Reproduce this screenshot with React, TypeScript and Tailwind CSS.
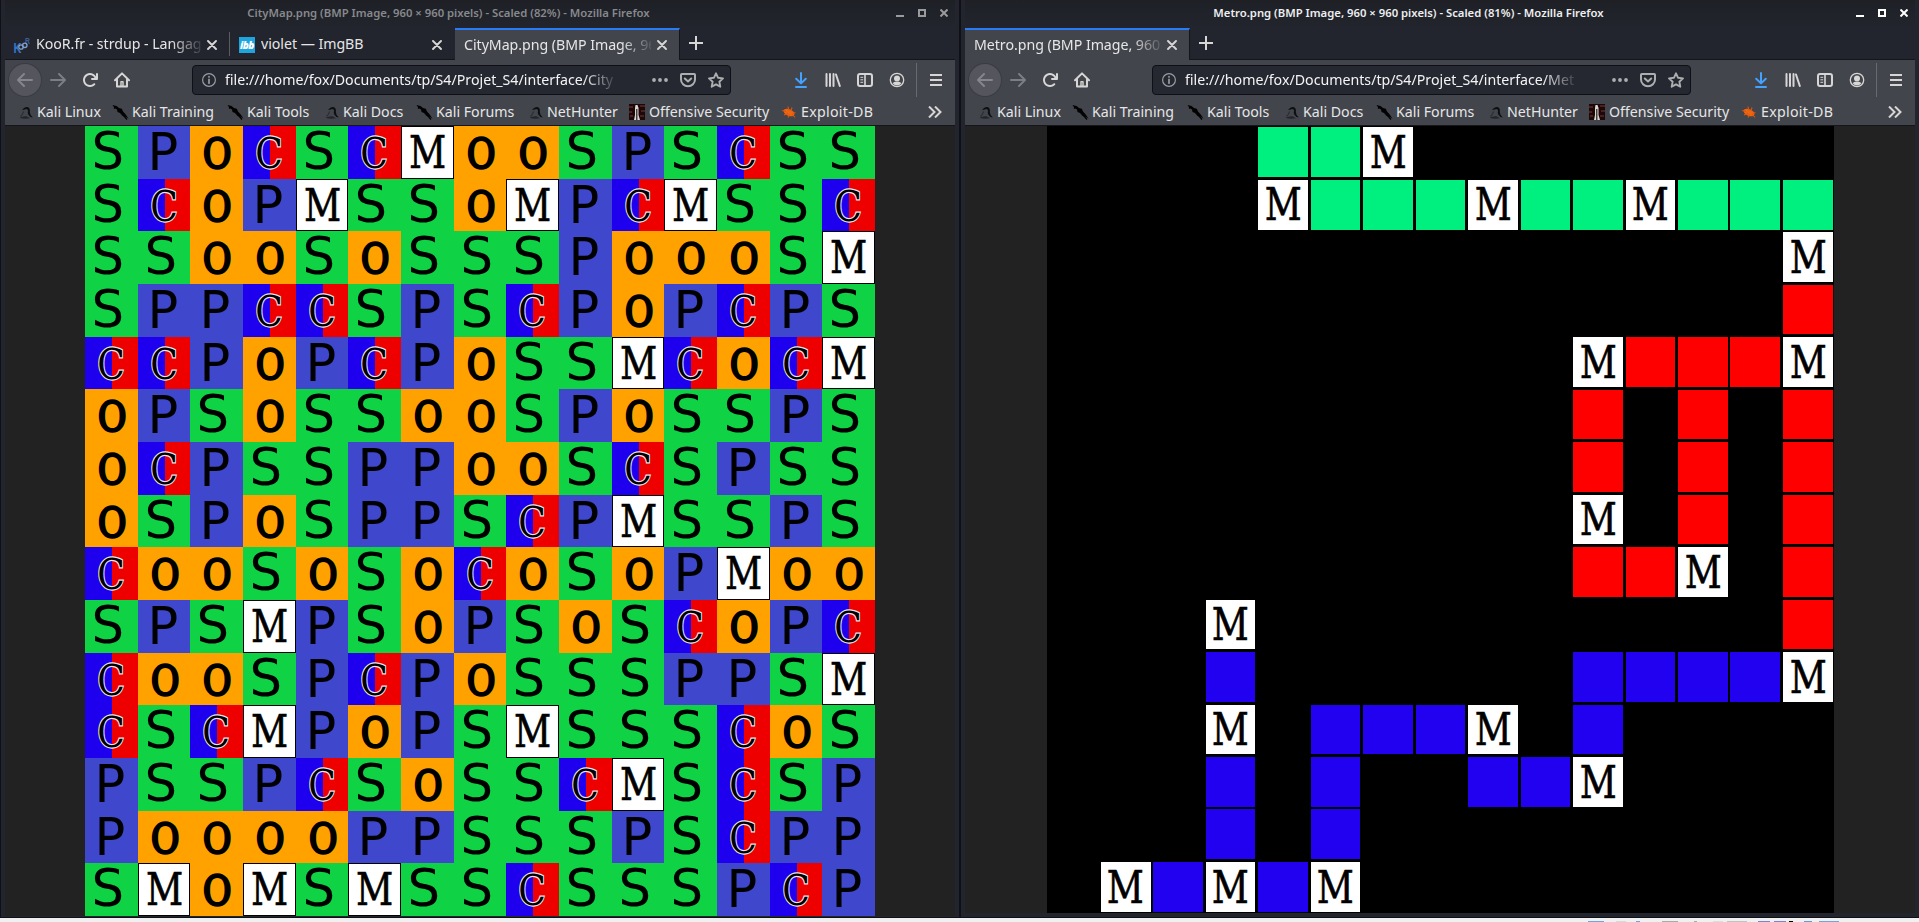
import React from "react";
import clsx from "clsx";

/* ---------- Toolbar icons (16px grid) ---------- */

type IconProps = { className?: string; children: React.ReactNode; fill?: boolean };

function Icon({ className, children, fill = true }: IconProps) {
  return (
    <svg
      viewBox="0 0 16 16"
      className={clsx("size-4 shrink-0", className)}
      fill={fill ? "currentColor" : "none"}
      stroke={fill ? "none" : "currentColor"}
      strokeWidth="1.8"
      strokeLinecap="round"
      strokeLinejoin="round"
    >
      {children}
    </svg>
  );
}

const arrowPath =
  "M15 7H3.41l4.3-4.29a1 1 0 1 0-1.42-1.42l-6 6a1 1 0 0 0 0 1.42l6 6a1 1 0 1 0 1.42-1.42L3.41 9H15a1 1 0 0 0 0-2z";

const BackIcon = () => (
  <Icon className="text-[#85868b]">
    <path d={arrowPath} />
  </Icon>
);
const ForwardIcon = () => (
  <Icon className="-scale-x-100 text-[#7b7e84]">
    <path d={arrowPath} />
  </Icon>
);
const ReloadIcon = () => (
  <Icon>
    <path d="M15 1a1 1 0 0 0-1 1v2.418A6.995 6.995 0 1 0 8 15a6.954 6.954 0 0 0 4.95-2.05 1 1 0 0 0-1.414-1.414A5.019 5.019 0 1 1 12.549 6H10a1 1 0 0 0 0 2h5a1 1 0 0 0 1-1V2a1 1 0 0 0-1-1z" />
  </Icon>
);
const HomeIcon = () => (
  <Icon fill={false}>
    <path d="M1 8.2 8 1.4l7 6.8M3 7.5v7h10v-7" strokeWidth="2" />
    <path d="M7 14V9.6h2V14" strokeWidth="1.4" />
  </Icon>
);
const InfoIcon = () => (
  <Icon fill={false} className="text-[#9b9ca1]">
    <circle cx="8" cy="8" r="6.4" strokeWidth="1.2" />
    <path d="M8 7.4v3.8M8 4.7v.2" strokeWidth="1.7" />
  </Icon>
);
const DotsIcon = () => (
  <Icon>
    <circle cx="2" cy="8" r="1.9" />
    <circle cx="8" cy="8" r="1.9" />
    <circle cx="14" cy="8" r="1.9" />
  </Icon>
);
const PocketIcon = () => (
  <Icon fill={false}>
    <path d="M1.8 2h12.4q.8 0 .8.8V7.5a7 6.7 0 0 1-14 0V2.8q0-.8.8-.8z" strokeWidth="2" />
    <path d="M4.8 6.5 8 9.5l3.2-3" strokeWidth="2" />
  </Icon>
);
const StarIcon = () => (
  <Icon fill={false}>
    <path d="m8 1.3 2.1 4.5 4.9.6-3.6 3.4.9 4.9L8 12.3l-4.300 2.400.9-4.900L1 6.400l4.900-.6z" strokeWidth="1.9" />
  </Icon>
);
const DownloadIcon = () => (
  <Icon fill={false} className="text-[#45a1ff]">
    <path d="M8 1v10M3.2 6.8 8 11.4l4.8-4.6" strokeWidth="2" />
    <path d="M3 15h10" strokeWidth="2" />
  </Icon>
);
const LibraryIcon = () => (
  <Icon fill={false}>
    <path d="M1.5 2v12M5 2v12M8.5 2v12M11 2.5 14.8 14" strokeWidth="2" />
  </Icon>
);
const SidebarIcon = () => (
  <Icon fill={false}>
    <rect x="1" y="2" width="14" height="12" rx="2" strokeWidth="2" />
    <path d="M8 2v12" strokeWidth="1.6" />
    <path d="M3.8 5.3h2M3.8 7.8h2M3.8 10.3h2" strokeWidth="1" />
  </Icon>
);
const AccountIcon = () => (
  <Icon fill={false}>
    <circle cx="8" cy="8" r="6.7" strokeWidth="1.3" />
    <circle cx="8" cy="6.4" r="3" fill="currentColor" stroke="none" />
    <path d="M3.6 11.3Q5 9.5 6.3 9.7h3.4q1.3-.2 2.7 1.6Q10.5 13.5 8 13.5t-4.4-2.2z" fill="currentColor" stroke="none" />
  </Icon>
);
const MenuIcon = () => (
  <Icon>
    <path d="M2 2h12v2H2zM2 7h12v2H2zM2 12h12v2H2z" />
  </Icon>
);
const CloseIcon = () => (
  <svg viewBox="0 0 10 10" className="size-2.5 shrink-0" fill="none" stroke="currentColor" strokeWidth="1.9" strokeLinecap="round">
    <path d="M1 1l8 8M9 1 1 9" />
  </svg>
);

/* ---------- Bookmark favicons ---------- */

const DragonIcon = () => (
  <svg viewBox="0 0 16 16" className="mr-[3px] size-4 shrink-0">
    <path d="M4 6Q6.5 2.5 9.5 3q3 1.2 2.3 5 .2 3.5 3 5.5-3.300-.5-4.500-3-.8-1.800-.3-4Q9.500 4.800 7.600 5.200 5.500 5.600 4 6z" fill="#0d0e10" />
    <path d="M1.5 13.800Q5 11.800 8.500 12.300l3.500 2Q6 15.200 1.500 13.800z" fill="#17181b" opacity=".7" />
    <path d="M5.5 7.5q-.5 3-3 5" stroke="#1c1d20" strokeWidth="1.2" fill="none" opacity=".6" />
  </svg>
);
const BladeIcon = () => (
  <svg viewBox="0 0 17 16" className="mr-[3px] h-4 w-[17px] shrink-0">
    <path d="M.5 1 4.5 2 7 4l2.800.8L11 7.500l2.500 2.700L16.500 14.500 13 12.500 10.500 12 8 9 5.500 8 5 5.500 2.500 4z" fill="#020202" />
    <path d="M11.5 11.5 15 15.5M4 2.5 2 4.5" stroke="#020202" strokeWidth="1.2" />
  </svg>
);
const OffSecIcon = () => (
  <svg viewBox="0 0 16 16" className="mr-1 size-4 shrink-0">
    <rect width="16" height="16" fill="#1d0808" />
    <path d="M0 3h4M11 2h5M0 8h3M12 7h4M1 12h3M11 12h4" stroke="#5a2a28" strokeWidth="1.5" />
    <path d="M6.5 1h2l1 3v7l1.500 5h-6L6 11V4z" fill="#d9d5d3" />
    <path d="M7 5h1.500v11H7z" fill="#4d3e3c" />
  </svg>
);
const ExploitIcon = () => (
  <svg viewBox="0 0 16 16" className="mr-1 size-4 shrink-0">
    <ellipse cx="8" cy="8.5" rx="5.8" ry="3.3" transform="rotate(25 8 8.5)" fill="#f0640f" />
    <path d="M1 6.5l4 1M7 2.5l.8 4M11 3.5 10 7M3 11l4-1.500M7 13.500l1.500-3M11 10l3 3.500M12 9.500l2.500-1" stroke="#d9560f" strokeWidth="1.1" />
  </svg>
);

const bookmarks = [
  { label: "Kali Linux", icon: DragonIcon, width: "w-[94px]" },
  { label: "Kali Training", icon: BladeIcon, width: "w-[115px]" },
  { label: "Kali Tools", icon: BladeIcon, width: "w-[97px]" },
  { label: "Kali Docs", icon: DragonIcon, width: "w-[92px]" },
  { label: "Kali Forums", icon: BladeIcon, width: "w-[112px]" },
  { label: "NetHunter", icon: DragonIcon, width: "w-[101px]" },
  { label: "Offensive Security", icon: OffSecIcon, width: "w-[152px]" },
  { label: "Exploit-DB", icon: ExploitIcon, width: "w-[100px] tracking-[0.3px]" },
];

/* ---------- Tab favicons ---------- */

const KoorFavicon = () => (
  <svg viewBox="0 0 16 16" className="size-4 shrink-0 overflow-visible">
    <g fontFamily="Liberation Sans" fontWeight="700">
      <text x="-.5" y="16" fontSize="14" fill="#3576c8" textLength="8" lengthAdjust="spacingAndGlyphs">K</text>
      <text x="11" y="7" fontSize="9" fill="#3d609c" textLength="5" lengthAdjust="spacingAndGlyphs">R</text>
    </g>
    <circle cx="7" cy="10" r="2.2" fill="none" stroke="#7f9fd0" strokeWidth="1.3" />
    <circle cx="10.8" cy="8.3" r="2.2" fill="none" stroke="#7f9fd0" strokeWidth="1.3" />
  </svg>
);
const IbbFavicon = () => (
  <span className="flex size-4 shrink-0 items-center justify-center bg-[#1fa5dd] font-['Open_Sans',sans-serif] text-[10px] leading-none font-extrabold tracking-[-0.5px] text-white italic">
    ibb
  </span>
);

/* ---------- Browser window ---------- */

type Tab = { title: string; favicon?: React.FC; active?: boolean; fade?: boolean };

function TabItem({ tab, last }: { tab: Tab; last: boolean }) {
  const Favicon = tab.favicon;
  return (
    <div
      className={clsx(
        "relative flex h-8 w-[225px] shrink-0 items-center border-t-2 pl-[9px]",
        tab.active
          ? "border-r border-t-[#2a7bf6] border-r-[#15161c] bg-[#42454c]"
          : "border-b border-t-transparent border-b-[#15161c]",
      )}
    >
      {Favicon && (
        <span className="mr-1.5 flex">
          <Favicon />
        </span>
      )}
      <span
        className={clsx(
          "flex-1 overflow-hidden py-1 tracking-[-0.04px] whitespace-pre text-[#e6e6e7]",
          tab.fade && "[mask-image:linear-gradient(to_right,black_calc(100%-30px),transparent_calc(100%+4px))]",
        )}
      >
        {tab.title}
      </span>
      <span className={clsx("ml-1.5 text-[#d6d6d4]", tab.active ? "mr-[12px]" : "mr-[13px]")}>
        <CloseIcon />
      </span>
      {!tab.active && !last && <span className="absolute top-[2px] right-0 h-6 w-px bg-[#5a5c63]" />}
    </div>
  );
}

type WindowProps = {
  title: string;
  focused?: boolean;
  tabs: Tab[];
  url: string;
  className: string;
  children: React.ReactNode;
};

function ToolButton({ children }: { children: React.ReactNode }) {
  return <span className="flex size-8 shrink-0 items-center justify-center">{children}</span>;
}

function BrowserWindow({ title, focused, tabs, url, className, children }: WindowProps) {
  return (
    <section className={clsx("flex h-[918px] flex-col border-b border-l border-[#101117] bg-[#22252d] pl-1", className)}>
      <header className="flex h-7 shrink-0 items-center bg-linear-to-b from-[#1e2026] to-[#22252d]">
        <h1
          className={clsx(
            "mr-1 flex-1 pb-[2px] text-center text-[11.3px] font-semibold whitespace-pre",
            focused ? "text-[#eeeeef]" : "text-[#88898c]",
          )}
        >
          {title}
        </h1>
        <div className={clsx("mr-[7px] flex items-center gap-[14px] pb-[2px]", focused ? "text-white" : "text-[#9b9b9d]")}>
          <span className="mt-[5px] h-0.5 w-2 bg-current" />
          <span className="size-2 border-2 border-current" />
          <svg viewBox="0 0 8 8" className="size-2" fill="none" stroke="currentColor" strokeWidth="2">
            <path d="M.5.5l7 7M7.5.5l-7 7" />
          </svg>
        </div>
      </header>

      <nav className="flex h-8 shrink-0">
        {tabs.map((tab, i) => (
          <TabItem key={tab.title} tab={tab} last={tabs[i + 1]?.active ?? false} />
        ))}
        <div className="flex flex-1 items-center border-b border-[#15161c] pl-[9px] text-[#d6d6d4]">
          <svg viewBox="0 0 14 14" className="mb-px size-3.5" fill="none" stroke="currentColor" strokeWidth="2">
            <path d="M7 0v14M0 7h14" />
          </svg>
        </div>
      </nav>

      <div className="flex h-10 shrink-0 items-center bg-[#42454c] pl-1 text-[#d6d6d4]">
        <span className="mr-px flex size-8 shrink-0 items-center justify-center rounded-full bg-[#54555d] ring-1 ring-[#3a3c43]">
          <BackIcon />
        </span>
        <ToolButton><ForwardIcon /></ToolButton>
        <ToolButton><ReloadIcon /></ToolButton>
        <ToolButton><HomeIcon /></ToolButton>
        <div className="ml-[54px] flex h-[30px] w-[539px] shrink-0 items-center rounded-[4px] border border-[#0f1015] bg-[#252731] pl-2">
          <InfoIcon />
          <span className="ml-2 w-[392px] overflow-hidden py-1 whitespace-pre text-[#f4f4f5] [mask-image:linear-gradient(to_right,black_calc(100%-34px),transparent_calc(100%+2px))]">
            {url}
          </span>
          <div className="ml-[35px] flex gap-3 text-[#adaeb0]">
            <DotsIcon />
            <PocketIcon />
            <StarIcon />
          </div>
        </div>
        <div className="ml-[54px] flex items-center">
          <ToolButton><DownloadIcon /></ToolButton>
          <ToolButton><LibraryIcon /></ToolButton>
          <ToolButton><SidebarIcon /></ToolButton>
          <ToolButton><AccountIcon /></ToolButton>
          <span className="mx-[3px] h-[34px] w-px bg-[#676a70]" />
          <ToolButton><MenuIcon /></ToolButton>
        </div>
      </div>

      <div className="flex h-[26px] shrink-0 items-center border-b border-[#15161c] bg-[#42454c] pb-px pl-[13px] text-[#e6e6e7]">
        {bookmarks.map(({ label, icon: FavIcon, width }) => (
          <span key={label} className={clsx("flex shrink-0 items-center whitespace-pre", width)}>
            <FavIcon />
            {label}
          </span>
        ))}
        <svg viewBox="0 0 14 12" className="ml-[47px] h-3 w-3.5" fill="none" stroke="#d6d6d4" strokeWidth="2">
          <path d="M1 .5 6.5 6 1 11.5M7 .5 12.500 6 7 11.500" />
        </svg>
      </div>

      <main className="flex flex-1 items-start bg-[#222222]">{children}</main>
    </section>
  );
}

/* ---------- City map ---------- */

const cityRows = [
  "SPOCSCMOOSPSCSS",
  "SCOPMSSOMPCMSSC",
  "SSOOSOSSSPOOOSM",
  "SPPCCSPSCPOPCPS",
  "CCPOPCPOSSMCOCM",
  "OPSOSSOOSPOSSPS",
  "OCPSSPPOOSCSPSS",
  "OSPOSPPSCPMSSPS",
  "COOSOSOCOSOPMOO",
  "SPSMPSOPSOSCOPC",
  "COOSPCPOSSSPPSM",
  "CSCMPOPSMSSSCOS",
  "PSSPCSOSSCMSCSP",
  "POOOOPPSSSPSCPP",
  "SMOMSMSSCSSSPCP",
];

const tileColors: Record<string, string> = {
  S: "bg-[#10d245]",
  P: "bg-[#3f48cc]",
  O: "bg-[#ffa200]",
  C: "bg-linear-to-r from-[#1f00ee] from-51% to-[#ee0000] to-51%",
  M: "border border-black bg-white",
};

const glyphs: Record<string, React.SVGProps<SVGTextElement>> = {
  S: { x: 6.5, y: 43.3, fontSize: 51, textLength: 32.6, fontFamily: "DejaVu Sans" },
  P: { x: 9.6, y: 44.2, fontSize: 51, textLength: 30.75, fontFamily: "DejaVu Sans" },
  O: { x: 13, y: 41.6, fontSize: 41.6, textLength: 28.4, fontFamily: "DejaVu Serif", stroke: "#000", strokeWidth: 2.7 },
  C: { x: 12.2, y: 42.1, fontSize: 43, textLength: 27.6, fontFamily: "DejaVu Serif", stroke: "#e8e8f4", strokeWidth: 2.4, paintOrder: "stroke" },
  M: { x: 7.9, y: 42.3, fontSize: 44.5, textLength: 37.2, fontFamily: "DejaVu Serif", stroke: "#000", strokeWidth: 0.6 },
};

function Glyph({ letter }: { letter: string }) {
  return (
    <svg viewBox="0 0 52.67 52.67" className="absolute inset-0 size-full overflow-visible">
      <text lengthAdjust="spacingAndGlyphs" {...glyphs[letter]}>
        {letter}
      </text>
    </svg>
  );
}

function CityMap() {
  return (
    <div className="ml-20 grid size-[790px] shrink-0 grid-cols-15 grid-rows-15">
      {cityRows.flatMap((row, r) =>
        row.split("").map((letter, c) => (
          <div key={`${r}-${c}`} className={clsx("relative", tileColors[letter])}>
            {letter === "M" ? (
              <div className="absolute -inset-px border-[1.5px] border-black/40">
                <div className="absolute -inset-px">
                  <Glyph letter="M" />
                </div>
              </div>
            ) : (
              <Glyph letter={letter} />
            )}
          </div>
        )),
      )}
    </div>
  );
}

/* ---------- Metro map ---------- */

const metroRows = [
  "....ggM........",
  "....MgggMggMggg",
  "..............M",
  "..............r",
  "..........MrrrM",
  "..........r.r.r",
  "..........r.r.r",
  "..........M.r.r",
  "..........rrM.r",
  "...M..........r",
  "...b......bbbbM",
  "...M.bbbM.b....",
  "...b.b..bbM....",
  "...b.b.........",
  ".MbMbM.........",
];

const lineColors: Record<string, string> = {
  g: "bg-[#00f080]",
  r: "bg-[#ff0000]",
  b: "bg-[#2200f0]",
  M: "bg-white",
};

function MetroMap() {
  return (
    <div className="ml-[82px] grid size-[787px] shrink-0 grid-cols-15 grid-rows-15 bg-black">
      {metroRows.flatMap((row, r) =>
        row.split("").map((cell, c) => (
          <div key={`${r}-${c}`} className="relative p-[1.4px]">
            <div className={clsx("size-full", lineColors[cell])} />
            {cell === "M" && <Glyph letter="M" />}
          </div>
        )),
      )}
    </div>
  );
}

/* ---------- Desktop ---------- */

function BottomStrip() {
  return (
    <footer className="flex h-1 items-end bg-[#f1f0f1] pl-[1588px]">
      <span className="mr-3 h-px w-4 bg-[#6fa6dc]" />
      <span className="mr-2.5 h-px w-2.5 bg-[#d8d8d8]" />
      <span className="mr-[22px] h-px w-1 bg-[#6fa6dc]" />
      <span className="mr-4 h-px w-4 bg-[#aaaaaa]" />
      <span className="mr-4 h-px w-[3px] bg-[#aaaaaa]" />
      <span className="mr-1 h-px w-2.5 bg-[#dddddd]" />
      <span className="mr-[11px] h-px w-5 bg-[#c2c2c2]" />
      <span className="mr-1 h-px w-3 bg-[#7886cf]" />
      <span className="mr-[3px] h-px w-3 bg-[#7886cf]" />
      <span className="mr-[11px] h-px w-1 bg-black" />
      <span className="mr-[7px] h-px w-2 bg-[#5f9ed3]" />
      <span className="h-px w-5 bg-[#6fa6dc]" />
    </footer>
  );
}

export default function App() {
  return (
    <div className="flex h-[922px] w-[1919px] flex-col overflow-hidden font-['Noto_Sans',sans-serif] text-[14.2px] leading-none">
      <div className="flex">
        <BrowserWindow
          title="CityMap.png (BMP Image, 960 × 960 pixels) - Scaled (82%) - Mozilla Firefox"
          tabs={[
            { title: "KooR.fr - strdup - Langag", favicon: KoorFavicon, fade: true },
            { title: "violet — ImgBB", favicon: IbbFavicon },
            { title: "CityMap.png (BMP Image, 96", active: true, fade: true },
          ]}
          url="file:///home/fox/Documents/tp/S4/Projet_S4/interface/City"
          className="w-[960px] border-r pr-1 pb-px"
        >
          <CityMap />
        </BrowserWindow>
        <BrowserWindow
          focused
          title="Metro.png (BMP Image, 960 × 960 pixels) - Scaled (81%) - Mozilla Firefox"
          tabs={[{ title: "Metro.png (BMP Image, 960", active: true, fade: true }]}
          url="file:///home/fox/Documents/tp/S4/Projet_S4/interface/Met"
          className="w-[959px] pr-1 pb-1"
        >
          <MetroMap />
        </BrowserWindow>
      </div>
      <BottomStrip />
    </div>
  );
}
